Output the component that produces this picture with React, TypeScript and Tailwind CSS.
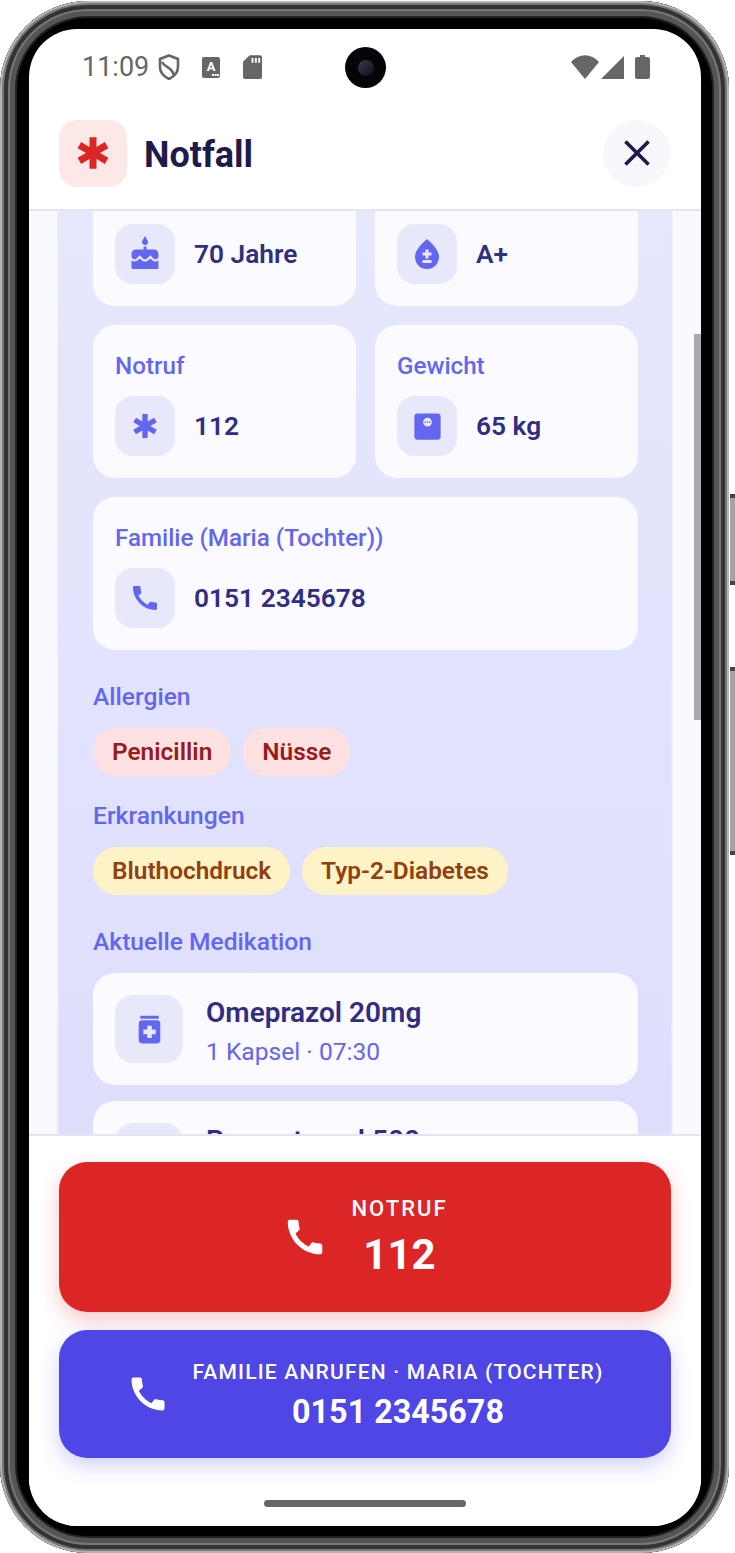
import React from "react";
import { MdCake, MdBloodtype, MdEmergency, MdCall, MdMedication, MdClose, MdMonitorWeight } from "react-icons/md";

const font = { fontFamily: "Roboto, 'Liberation Sans', sans-serif" };

function IconBox({ children, wide }: { children: React.ReactNode; wide?: boolean }) {
  return (
    <div className={`flex shrink-0 items-center justify-center rounded-[18px] bg-[#e8e8fb] text-[#6366f1] ${wide ? "h-[68px] w-[68px]" : "h-[60px] w-[60px]"}`}>
      {children}
    </div>
  );
}

function Info({ label, value, icon, className = "" }: { label?: string; value: string; icon: React.ReactNode; className?: string }) {
  return (
    <div className={`rounded-[22px] bg-[#fbfbff] px-[22px] pb-[22px] pt-[25px] ${className}`}>
      {label && <div className="mb-[14px] text-[24.2px] font-medium leading-[32px] text-[#6366f1]">{label}</div>}
      <div className="flex items-center gap-[19px]">
        <IconBox>{icon}</IconBox>
        <span className="text-[26.3px] font-semibold leading-[32px] text-[#312e81]">{value}</span>
      </div>
    </div>
  );
}

function Pill({ text, tone }: { text: string; tone: "red" | "amber" }) {
  return (
    <span className={`flex h-[48px] items-center rounded-full px-[19px] text-[24.4px] font-semibold ${tone === "red" ? "bg-[#fee2e2] text-[#991b1b]" : "bg-[#fef3c7] text-[#92400e]"}`}>
      {text}
    </span>
  );
}

function Med({ name, sub }: { name: string; sub: string }) {
  return (
    <div className="flex items-start gap-[23px] rounded-[22px] bg-[#fafaff] p-[22px]">
      <IconBox wide><MdMedication size={37} /></IconBox>
      <div className="h-[68px] pt-px">
        <div className="text-[28px] font-semibold leading-[34px] text-[#312e81]">{name}</div>
        <div className="mt-[5px] text-[24.6px] leading-[34px] text-[#6366f1]">{sub}</div>
      </div>
    </div>
  );
}

function SectionLabel({ children, className = "" }: { children: React.ReactNode; className?: string }) {
  return <div className={`text-[24.6px] font-medium leading-[32px] text-[#6366f1] ${className}`}>{children}</div>;
}

export default function App() {
  return (
    <div className="relative h-[1553px] w-[735px] overflow-hidden bg-white" style={font}>
      <div className="absolute right-0 top-[494px] h-[91px] w-[5px] border-y-[4px] border-y-[#444] bg-[#a3a3a3]" />
      <div className="absolute right-0 top-[667px] h-[188px] w-[5px] border-y-[4px] border-y-[#444] bg-[#a3a3a3]" />

      <div className="mt-px h-[1552px] w-[729px] rounded-[88px] bg-black pb-[27px] pl-[29px] pr-[28px] pt-[28px] shadow-[inset_0_0_0_2px_#b4b4b4,inset_0_0_0_4px_#777,inset_0_0_0_8px_#333,inset_0_0_0_10px_#777,inset_0_0_0_15px_#555,inset_0_0_0_17px_#222]">
        <div className="flex h-[1497px] w-[672px] flex-col overflow-hidden rounded-[48px] bg-white">
          {/* status bar */}
          <div className="relative flex h-[72px] shrink-0 items-center justify-between pl-[53px] pr-[51px] pt-[4px] text-[#666]">
            <div className="flex items-center">
              <span className="text-[27px] leading-none">11:09</span>
              <svg className="ml-[9px]" width="22" height="26" viewBox="0 0 22 26" fill="none" stroke="#666" strokeWidth="2.6">
                <path d="M11 1.5 L20 5 V13 C20 19 15 23 11 25 C7 23 2 19 2 13 V5 Z" />
                <path d="M4 8 C7 14 13 12 16 21" />
              </svg>
              <svg className="ml-[22px]" width="18" height="21" viewBox="0 0 18 21">
                <rect width="18" height="21" rx="2" fill="#666" />
                <text x="9" y="14" textAnchor="middle" fontSize="13" fontWeight="700" fill="#fff">A</text>
                <rect x="10" y="17" width="2" height="2" fill="#fff" />
                <rect x="12.6" y="17" width="2" height="2" fill="#fff" />
                <rect x="15" y="17" width="2" height="2" fill="#fff" />
              </svg>
              <svg className="ml-[23px]" width="19" height="24" viewBox="0 0 20 25">
                <path d="M7 0 H18 A2 2 0 0 1 20 2 V23 A2 2 0 0 1 18 25 H2 A2 2 0 0 1 0 23 V7 Z" fill="#666" />
                <rect x="9" y="3" width="2" height="5" fill="#fff" />
                <rect x="12.5" y="3" width="2" height="5" fill="#fff" />
                <rect x="16" y="3" width="2" height="5" fill="#fff" />
              </svg>
            </div>
            <div className="absolute left-[316px] top-[18px] flex h-[41px] w-[41px] items-center justify-center rounded-full bg-[#050507]">
              <div className="h-[16px] w-[16px] rounded-full bg-gradient-to-br from-[#3a3a50] to-[#101018]" />
            </div>
            <div className="flex items-center">
              <svg width="28" height="24" viewBox="0 0 28 24"><path d="M14 24 L0 7 C8 -2 20 -2 28 7 Z" fill="#666" /></svg>
              <svg className="ml-[2px]" width="23" height="23" viewBox="0 0 23 23"><path d="M23 0 V23 H0 Z" fill="#666" /></svg>
              <svg className="ml-[11px]" width="15" height="24" viewBox="0 0 15 24"><path d="M5 0 H10 V2 H13 A2 2 0 0 1 15 4 V22 A2 2 0 0 1 13 24 H2 A2 2 0 0 1 0 22 V4 A2 2 0 0 1 2 2 H5 Z" fill="#666" /></svg>
            </div>
          </div>

          {/* header */}
          <div className="flex h-[110px] shrink-0 items-center justify-between border-b-2 border-b-[#e4e4f4] pb-[4px] pl-[30px] pr-[31px]">
            <div className="flex items-center gap-[17px]">
              <div className="flex h-[67px] w-[68px] items-center justify-center rounded-[18px] bg-[#fde8e8] text-[#dc2626]">
                <MdEmergency size={42} />
              </div>
              <span className="pt-[4px] text-[36px] font-bold leading-[44px] text-[#1e1b4b]">Notfall</span>
            </div>
            <div className="flex h-[67px] w-[67px] items-center justify-center rounded-full bg-[#f7f7fc] text-[#1e1b4b]">
              <MdClose size={44} />
            </div>
          </div>

          {/* content */}
          <div className="min-h-0 flex-1 overflow-hidden bg-[#f9fafe] px-[30px]">
            <div className="relative h-full">
              <div className="absolute right-[-30px] top-[123px] h-[386px] w-[7px] bg-[#aaa]" />
              <div className="h-full overflow-hidden bg-gradient-to-b from-[#e6e8fd] to-[#dedefc] pl-[34px] pr-[33px] shadow-[0_0_3px_#c8c8dc]">
                <div className="mt-[-58px] flex flex-col">
                  <div className="grid grid-cols-2 gap-[19px]">
                    <Info label="Alter" value="70 Jahre" icon={<MdCake size={36} />} />
                    <Info label="Blutgruppe" value="A+" icon={<MdBloodtype size={36} />} />
                    <Info label="Notruf" value="112" icon={<MdEmergency size={32} />} />
                    <Info label="Gewicht" value="65 kg" icon={<MdMonitorWeight size={35} />} />
                    <Info className="col-span-2" label="Familie (Maria (Tochter))" value="0151 2345678" icon={<MdCall size={32} />} />
                  </div>
                  <SectionLabel className="mt-[31px]">Allergien</SectionLabel>
                  <div className="mt-[15px] flex gap-[12px]">
                    <Pill text="Penicillin" tone="red" />
                    <Pill text="Nüsse" tone="red" />
                  </div>
                  <SectionLabel className="mt-[24px]">Erkrankungen</SectionLabel>
                  <div className="mt-[15px] flex gap-[12px]">
                    <Pill text="Bluthochdruck" tone="amber" />
                    <Pill text="Typ-2-Diabetes" tone="amber" />
                  </div>
                  <SectionLabel className="mt-[31px]">Aktuelle Medikation</SectionLabel>
                  <div className="mt-[15px] flex flex-col gap-[16px]">
                    <Med name="Omeprazol 20mg" sub="1 Kapsel · 07:30" />
                    <Med name="Paracetamol 500" sub="1 Tablette · 12:00" />
                  </div>
                </div>
              </div>
            </div>
          </div>

          {/* footer */}
          <div className="flex h-[392px] shrink-0 flex-col border-t-2 border-t-[#e4e4f4] bg-white px-[30px] pt-[26px]">
            <div className="flex h-[150px] items-center justify-center gap-[23px] rounded-[28px] bg-[#dc2626] text-white shadow-[0_8px_20px_rgba(220,38,38,0.25)]">
              <MdCall size={46} />
              <div className="flex flex-col items-center">
                <span className="text-[22px] font-medium leading-[30px] tracking-[2px]">NOTRUF</span>
                <span className="mt-[6px] text-[42px] font-bold leading-[50px]">112</span>
              </div>
            </div>
            <div className="mt-[18px] flex h-[128px] items-center justify-center gap-[22px] rounded-[28px] bg-[#4f46e5] text-white shadow-[0_8px_20px_rgba(79,70,229,0.25)]">
              <MdCall size={44} />
              <div className="flex flex-col items-center">
                <span className="text-[21px] font-medium leading-[30px] tracking-[1.2px]">FAMILIE ANRUFEN · MARIA (TOCHTER)</span>
                <span className="mt-[5px] text-[32.3px] font-bold leading-[40px]">0151 2345678</span>
              </div>
            </div>
            <div className="mx-auto mt-[42px] h-[7px] w-[202px] rounded-full bg-[#666]" />
          </div>
        </div>
      </div>
    </div>
  );
}
